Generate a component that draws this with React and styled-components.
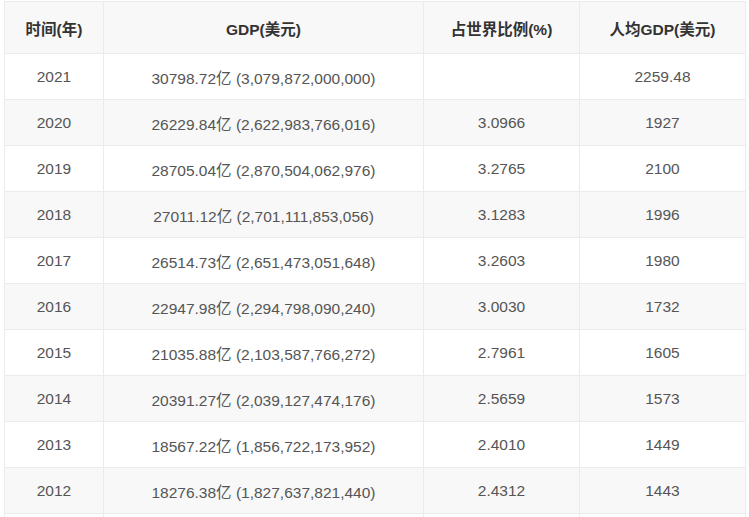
import styled, { createGlobalStyle } from "styled-components";

const Global = createGlobalStyle`
  body { margin: 0; background: #fff; font-family: "Liberation Sans", Arial, "Noto Sans CJK SC", sans-serif; overflow: hidden; }
`;

const Wrap = styled.div`
  padding: 1px 5px 0 4px;
`;

const Table = styled.table`
  border-collapse: collapse;
  width: 741px;
  table-layout: fixed;
  font-size: 15.5px;
  color: #555;
`;

const Th = styled.th`
  height: 51px;
  background: #f8f8f8;
  border: 1px solid #ebebeb;
  color: #333;
  font-weight: bold;
  text-align: center;
  padding: 0;
`;

const Row = styled.tr`
  background: ${(p) => (p.$alt ? "#f8f8f8" : "#fff")};
`;

const Td = styled.td`
  height: 45px;
  border: 1px solid #ebebeb;
  text-align: center;
  padding: 0;
`;

const rows = [
  ["2021", "30798.72亿 (3,079,872,000,000)", "", "2259.48"],
  ["2020", "26229.84亿 (2,622,983,766,016)", "3.0966", "1927"],
  ["2019", "28705.04亿 (2,870,504,062,976)", "3.2765", "2100"],
  ["2018", "27011.12亿 (2,701,111,853,056)", "3.1283", "1996"],
  ["2017", "26514.73亿 (2,651,473,051,648)", "3.2603", "1980"],
  ["2016", "22947.98亿 (2,294,798,090,240)", "3.0030", "1732"],
  ["2015", "21035.88亿 (2,103,587,766,272)", "2.7961", "1605"],
  ["2014", "20391.27亿 (2,039,127,474,176)", "2.5659", "1573"],
  ["2013", "18567.22亿 (1,856,722,173,952)", "2.4010", "1449"],
  ["2012", "18276.38亿 (1,827,637,821,440)", "2.4312", "1443"],
  ["", "", "", ""],
];

export default function App() {
  return (
    <Wrap>
      <Global />
      <Table>
        <colgroup>
          <col style={{ width: 99 }} />
          <col style={{ width: 320 }} />
          <col style={{ width: 156 }} />
          <col style={{ width: 166 }} />
        </colgroup>
        <thead>
          <tr>
            <Th>时间(年)</Th>
            <Th>GDP(美元)</Th>
            <Th>占世界比例(%)</Th>
            <Th>人均GDP(美元)</Th>
          </tr>
        </thead>
        <tbody>
          {rows.map((r, i) => (
            <Row key={i} $alt={i % 2 === 1}>
              {r.map((c, j) => (
                <Td key={j}>{c}</Td>
              ))}
            </Row>
          ))}
        </tbody>
      </Table>
    </Wrap>
  );
}
